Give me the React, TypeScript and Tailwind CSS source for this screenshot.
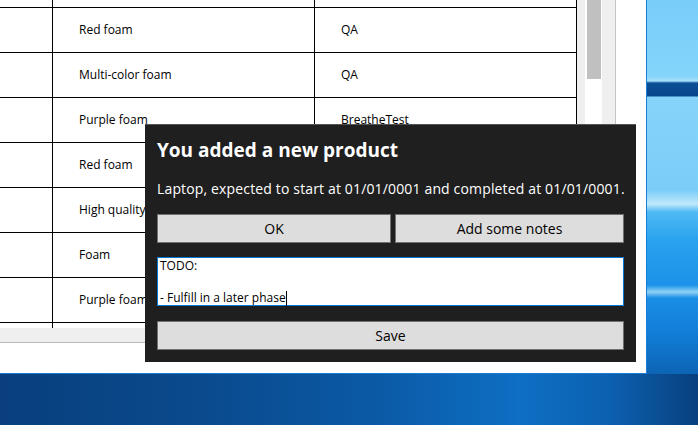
const rows: [string, string][] = [
  ['Foam', 'QA'],
  ['Red foam', 'QA'],
  ['Multi-color foam', 'QA'],
  ['Purple foam', 'BreatheTest'],
  ['Red foam', 'QA'],
  ['High quality foam', 'BreatheTest'],
  ['Foam', 'QA'],
  ['Purple foam', 'QA'],
  ['Foam', 'BreatheTest'],
]

function ProductGrid() {
  return (
    <div className="h-[328px] overflow-hidden">
      <div className="-mt-[37px]">
        {rows.map(([name, owner], i) => (
          <div key={i} className="flex h-[45px] border-b border-black text-[12px] text-black">
            <div className="w-[53px] border-r border-black" />
            <div className="w-[262px] border-r border-black pl-[26px] flex items-center">{name}</div>
            <div className="w-[262px] border-r border-black pl-[26px] flex items-center">{owner}</div>
          </div>
        ))}
      </div>
    </div>
  )
}

function AppWindow() {
  return (
    <div className="w-[647px] h-full bg-white border-r border-b border-[#1a7fd4] flex">
      <div className="w-[577px] flex flex-col">
        <ProductGrid />
        <div className="h-[15px] bg-[#efefef] border-b border-[#bababa]" />
      </div>
      <div className="w-[8px] h-[342px] bg-[#efefef]" />
      <div className="w-[17px] h-[342px] bg-white">
        <div className="ml-[2px] w-[14px] h-[79px] bg-[#c0c0c0]" />
      </div>
      <div className="w-[14px] h-[342px] bg-[#efefef] border-r border-[#c4c4c4]" />
      <div className="flex-1" />
    </div>
  )
}

function NewProductDialog() {
  const btn = 'bg-[#dddddd] border border-[#707070] text-[14px] text-black flex items-center justify-center'
  return (
    <div className="absolute left-[145px] top-[124px] w-[491px] bg-[#1f1f1f] border-t border-[#555555] px-[12px] pt-[13px] pb-[12px]">
      <div className="text-[19px] font-bold leading-[24px] text-white">You added a new product</div>
      <div className="mt-[17px] text-[14px] tracking-[0.15px] leading-[20px] text-white whitespace-nowrap">
        Laptop, expected to start at 01/01/0001 and completed at 01/01/0001.
      </div>
      <div className="mt-[15px] flex gap-[4px] h-[29px]">
        <button className={`w-[234px] ${btn}`}>OK</button>
        <button className={`flex-1 ${btn}`}>Add some notes</button>
      </div>
      <div className="mt-[14px] h-[49px] bg-white border border-[#0078d7] px-[2px] text-[12px] leading-[16px] text-black">
        <div>TODO:</div>
        <div>&nbsp;</div>
        <div>
          - Fulfill in a later phase
          <span className="inline-block w-px h-[15px] bg-black align-[-4px]" />
        </div>
      </div>
      <button className={`mt-[15px] h-[29px] w-full ${btn}`}>Save</button>
    </div>
  )
}

export default function App() {
  return (
    <div className="relative w-[698px] h-[425px] overflow-hidden flex flex-col font-['Open_Sans',sans-serif]">
      <div className="flex h-[374px]">
        <AppWindow />
        <div className="flex-1 bg-[linear-gradient(180deg,#78cdf9_0px,#84d4fb_76px,#a8e0fa_81px,#0a5096_83px,#06458a_96px,#86d3fa_97px,#7bcdf8_190px,#bfe8fa_204px,#4fbaf4_212px,#2aa3ee_240px,#1b92e8_285px,#8fd2f5_292px,#1a8ee6_298px,#127fd9_330px,#0c64b4_374px)]" />
      </div>
      <div className="flex-1 bg-[linear-gradient(90deg,#093f7c_0px,#0a4a8d_200px,#0b5aa6_380px,#0e6fc4_520px,#0c60b0_610px,#08407e_698px)]" />
      <NewProductDialog />
    </div>
  )
}
